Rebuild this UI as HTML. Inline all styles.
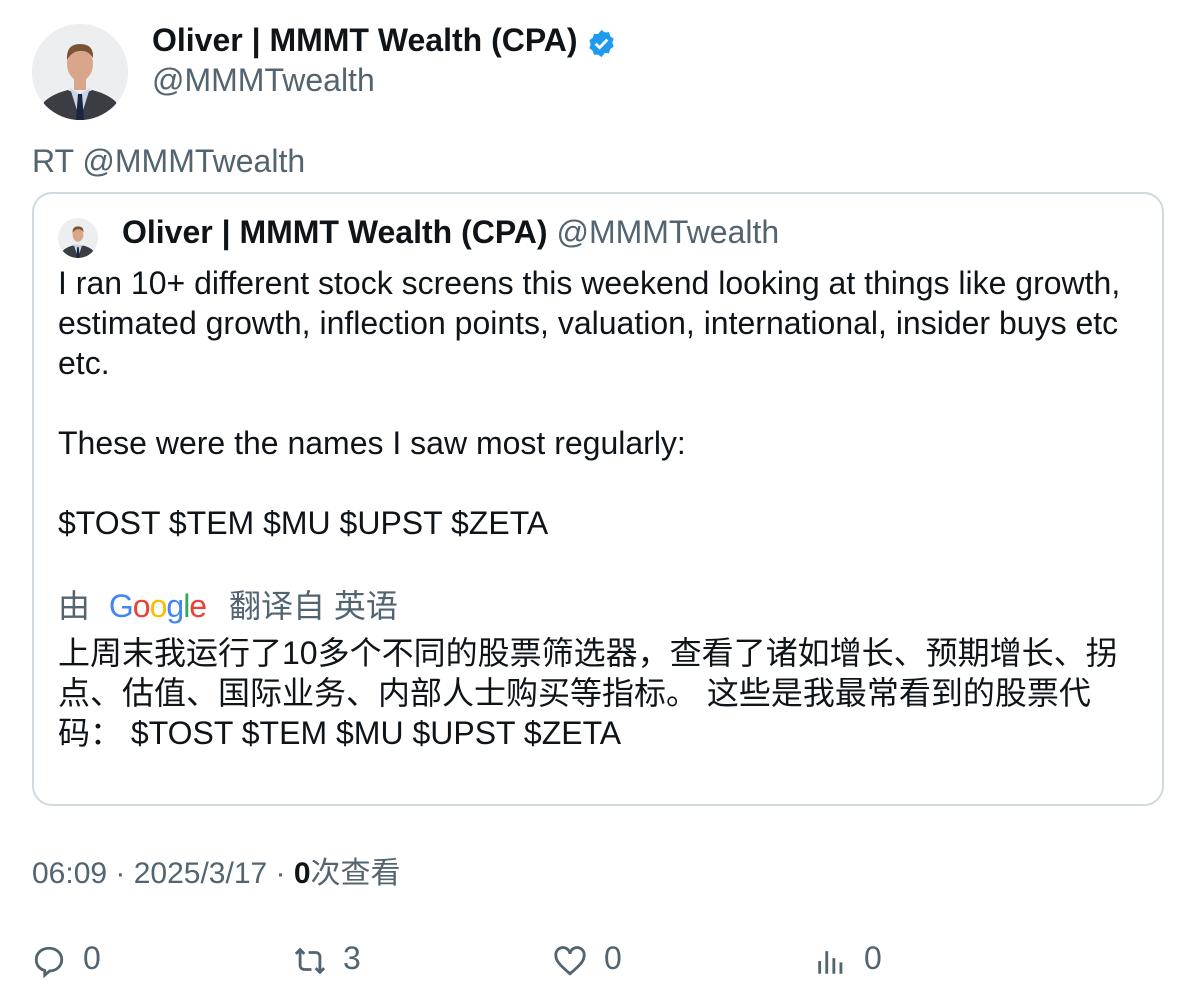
<!DOCTYPE html>
<html><head><meta charset="utf-8"><style>
body{margin:0;width:1196px;height:1006px;background:#fff;font-family:"Liberation Sans","Noto Sans CJK SC",sans-serif;color:#0f1419;position:relative;overflow:hidden}
.abs{position:absolute;white-space:nowrap}
.g{color:#536471}
.av{position:absolute;border-radius:50%;overflow:hidden;background:#eef0f2}
</style></head><body>
<div class="av" style="left:32px;top:24px;width:96px;height:96px">
<svg width="96" height="96" viewBox="0 0 96 96"><rect width="96" height="96" fill="#eceef0"/>
<path d="M8 96 L12 78 Q20 70 36 66 L48 72 L60 66 Q76 70 84 78 L88 96Z" fill="#3a3d44"/>
<path d="M38 64 L48 96 L58 64 L48 70Z" fill="#c9d6e8"/>
<path d="M46 70 L50 70 L52 96 L44 96Z" fill="#1b2540"/>
<ellipse cx="48" cy="40" rx="13" ry="17" fill="#d9a68a"/>
<path d="M35 36 Q34 20 48 20 Q62 20 61 34 Q56 26 48 27 Q40 27 35 36Z" fill="#7a5335"/>
<rect x="42" y="54" width="12" height="12" fill="#d9a68a"/></svg></div>
<div class="abs" style="left:152px;top:22px;font-size:32px;font-weight:bold">Oliver | MMMT Wealth (CPA)</div>
<svg class="abs" style="left:586px;top:28px" width="31" height="31" viewBox="0 0 24 24"><path d="M12 1.5l2.6 1.9 3.2-.1 1 3.1 2.6 1.9-1 3.1 1 3.1-2.6 1.9-1 3.1-3.2-.1L12 22.5l-2.6-1.9-3.2.1-1-3.1-2.6-1.9 1-3.1-1-3.1 2.6-1.9 1-3.1 3.2.1z" fill="#1d9bf0"/><path d="M7.5 12.2l3 3 6-6.2" stroke="#fff" stroke-width="2.2" fill="none"/></svg>
<div class="abs g" style="left:152px;top:62px;font-size:32px">@MMMTwealth</div>
<div class="abs g" style="left:32px;top:143px;font-size:32px">RT @MMMTwealth</div>
<div style="position:absolute;left:32px;top:192px;width:1128px;height:610px;border:2px solid #cfd9de;border-radius:20px"></div>
<div class="av" style="left:58px;top:218px;width:40px;height:40px">
<svg width="40" height="40" viewBox="0 0 96 96"><rect width="96" height="96" fill="#eceef0"/><path d="M8 96 L12 78 Q20 70 36 66 L48 72 L60 66 Q76 70 84 78 L88 96Z" fill="#3a3d44"/><path d="M38 64 L48 96 L58 64Z" fill="#c9d6e8"/><path d="M46 70 L50 70 L52 96 L44 96Z" fill="#1b2540"/><ellipse cx="48" cy="40" rx="13" ry="17" fill="#d9a68a"/><path d="M35 36 Q34 20 48 20 Q62 20 61 34 Q56 26 48 27 Q40 27 35 36Z" fill="#7a5335"/></svg></div>
<div class="abs" style="left:122px;top:214px;font-size:32px;font-weight:bold">Oliver | MMMT Wealth (CPA) <span class="g" style="font-weight:normal">@MMMTwealth</span></div>
<div class="abs" style="left:58px;top:263px;font-size:32px;line-height:40px;white-space:normal;width:1080px">I ran 10+ different stock screens this weekend looking at things like growth, estimated growth, inflection points, valuation, international, insider buys etc etc.<br><br>These were the names I saw most regularly:<br><br>$TOST $TEM $MU $UPST $ZETA</div>
<div class="abs g" style="left:58px;top:581px;font-size:32px">由 <span style="font-family:'Liberation Sans',sans-serif;font-size:32px;letter-spacing:-1px;margin:0 14px 0 10px"><span style="color:#4285f4">G</span><span style="color:#ea4335">o</span><span style="color:#fbbc05">o</span><span style="color:#4285f4">g</span><span style="color:#34a853">l</span><span style="color:#ea4335">e</span></span> 翻译自 英语</div>
<div class="abs" style="left:58px;top:633px;font-size:32px;line-height:40px;white-space:normal;width:1070px">上周末我运行了10多个不同的股票筛选器，查看了诸如增长、预期增长、拐点、估值、国际业务、内部人士购买等指标。 这些是我最常看到的股票代码： $TOST $TEM $MU $UPST $ZETA</div>
<div class="abs g" style="left:32px;top:848px;font-size:30px">06:09 · 2025/3/17 · <b style="color:#0f1419">0</b>次查看</div>
<svg class="abs" style="left:32px;top:944px" width="34" height="34" viewBox="0 0 24 24" fill="none" stroke="#536471" stroke-width="2"><path d="M12 3c5 0 9 3.3 9 8s-4 8-8.5 8L9 22v-3.3C5.5 17.8 3 15 3 11c0-4.7 4-8 9-8z"/></svg>
<div class="abs g" style="left:83px;top:940px;font-size:32px">0</div>
<svg class="abs" style="left:292px;top:944px" width="36" height="34" viewBox="0 0 24 24" fill="none" stroke="#536471" stroke-width="2"><path d="M2 7l3-3 3 3M5 4v11a3 3 0 003 3h5M22 17l-3 3-3-3M19 20V9a3 3 0 00-3-3h-5"/></svg>
<div class="abs g" style="left:343px;top:940px;font-size:32px">3</div>
<svg class="abs" style="left:553px;top:944px" width="34" height="34" viewBox="0 0 24 24" fill="none" stroke="#536471" stroke-width="2"><path d="M12 21C5 15 2 12 2 8a5 5 0 0110-1 5 5 0 0110 1c0 4-3 7-10 13z"/></svg>
<div class="abs g" style="left:604px;top:940px;font-size:32px">0</div>
<svg class="abs" style="left:814px;top:944px" width="34" height="34" viewBox="0 0 24 24" fill="none" stroke="#536471" stroke-width="2"><path d="M4 21V12M9 21V5M14 21V10M19 21V13"/></svg>
<div class="abs g" style="left:864px;top:940px;font-size:32px">0</div>
</body></html>
